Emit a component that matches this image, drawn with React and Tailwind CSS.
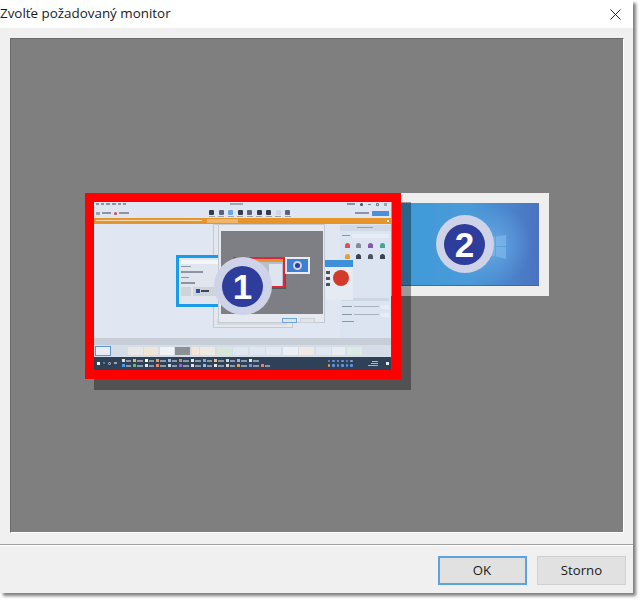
import React from "react";

const swatches = ["#d9dfe9","#e8b46a","#ffffff","#e0a060","#8fc0ee","#d98a5a","#e6e6e6","#7aa7e0","#f0c080","#cfd8e6","#90b8e8","#e8e8e8"];
const swatches2 = ["#4aa0e8","#60c070","#e8e8e8","#e88a70","#cfd8e6","#a060d8","#e8e8e8","#90c0f0","#e8e8e8","#d8d8d8","#e8a050","#7a8ae0","#e87a7a"];
const thumbs = [
  ["w-[15px]", "bg-[#e8e8e6]"],
  ["w-[14px]", "bg-[#efe6d8]"],
  ["w-[14px]", "bg-[#f1f3f6]"],
  ["w-[15px]", "bg-[#8c8f94]"],
  ["w-[7px]", "bg-[#f3e6d8]"],
  ["w-[15px]", "bg-[#efe9e2]"],
  ["w-[15px]", "bg-[#d6e8d8]"],
  ["w-[15px]", "bg-[#dfe7f3]"],
  ["w-[15px]", "bg-[#dfe7f3]"],
  ["w-[15px]", "bg-[#e3e9f3]"],
  ["w-[15px]", "bg-[#eceff4]"],
  ["w-[15px]", "bg-[#f0e8e4]"],
  ["w-[15px]", "bg-[#dfe7f3]"],
  ["w-[13px]", "bg-[#e8edf3]"],
  ["w-[15px]", "bg-[#d9ebe4]"],
];
const tools = ["#333c4c","#5a6478","#6ea4e6","#333c4c","#5a6478","#333c4c","#333c4c","#cfd6e2","#5a6478"];
const styleMarks = ["#d8505a","#7f8c9c","#8a55b0","#40a890","#e0a030","#3a4350","#4a5260","#3a4350"];

function Taskbar() {
  return (
    <div className="flex h-[13px] items-center gap-[3px] bg-[#2f4156] pl-[3px] pr-[2px]">
      <div className="flex w-[22px] items-center gap-[3px]">
        <span className="h-[3px] w-[3px] bg-white" />
        <span className="h-[2px] w-[2px] rounded-full bg-[#7f8b99]" />
        <span className="h-[3px] w-[3px] rounded-full border border-[#c5ccd6]" />
        <span className="h-[2px] w-[3px] bg-[#9aa5b2]" />
      </div>
      <div className="flex flex-1 flex-col gap-[2px]">
        <div className="flex gap-[2px]">
          {swatches.map((c, i) => (
            <div key={i} className="flex w-[9.6px] items-center gap-[1px]">
              <span className="h-[3px] w-[3px] shrink-0" style={{ background: c }} />
              <span className="h-[2px] flex-1 bg-[#8d99a8]" />
            </div>
          ))}
        </div>
        <div className="flex gap-[2px]">
          {swatches2.map((c, i) => (
            <div key={i} className="flex w-[9.6px] items-center gap-[1px]">
              <span className="h-[3px] w-[3px] shrink-0" style={{ background: c }} />
              <span className="h-[2px] flex-1 bg-[#8d99a8]" />
            </div>
          ))}
        </div>
      </div>
      <div className="flex w-[28px] flex-wrap gap-[2px]">
        {["#5a95e8","#5a95e8","#8aa0b8","#5a95e8","#5a95e8","#8aa0b8","#e89a50","#5a95e8","#7a8ae0","#5a95e8","#5a95e8","#5a95e8"].map((c, i) => (
          <span key={i} className="h-[2.5px] w-[2.5px] rounded-[1px]" style={{ background: c }} />
        ))}
      </div>
      <div className="flex w-[24px] flex-col items-end pr-[5px]">
        <span className="h-[1px] w-[6px] bg-[#aab4c0]" />
        <span className="mt-[1px] h-[1px] w-[7px] bg-[#aab4c0]" />
        <span className="mt-[1px] h-[1px] w-[10px] bg-[#aab4c0]" />
      </div>
      <span className="h-[3px] w-[3px] bg-[#e6e9ee]" />
    </div>
  );
}

function NumberBadge({ n, className }) {
  return (
    <div className={`absolute flex h-[58px] w-[58px] items-center justify-center rounded-full bg-[#cfd3e8] ${className}`}>
      <div className="flex h-[41px] w-[41px] items-center justify-center rounded-full bg-[#2e3d9c] text-[35px] leading-none font-bold text-white [font-family:'Liberation_Sans',sans-serif]">
        {n}
      </div>
    </div>
  );
}

function MiniDesktop() {
  return (
    <div className="relative flex h-[168px] w-[297px] flex-col overflow-hidden bg-[#e0e7f3] blur-[0.45px]">
      {/* title + toolbar */}
      <div className="flex h-[16px] flex-col bg-[#dfe6f1] px-[2px] pt-[1px]">
        <div className="flex items-center justify-between">
          <div className="flex gap-[2px]">
            {[3, 3, 4, 4, 3, 3].map((w, i) => (
              <span key={i} className="h-[1.5px] bg-[#8d95a3]" style={{ width: w }} />
            ))}
          </div>
          <span className="h-[1.5px] w-[13px] bg-[#a0a8b5]" />
          <div className="flex items-center gap-[5px] pr-[2px]">
            <span className="h-[1.5px] w-[8px] bg-[#8d95a3]" />
            <span className="h-[3px] w-[3px] rounded-full bg-[#47505f]" />
            <span className="h-[1px] w-[3px] bg-[#7b8494]" />
            <span className="h-[3px] w-[3px] border border-[#7b8494]" />
            <span className="h-[3px] w-[3px] bg-[#9aa3b1]" />
          </div>
        </div>
        <div className="mt-[4px] flex items-center">
          <span className="h-[3px] w-[4px] bg-[#9aa3b1]" />
          <span className="ml-[2px] h-[1.5px] w-[9px] bg-[#8d95a3]" />
          <span className="ml-[3px] h-[3px] w-[3px] rounded-full bg-[#d94b4b]" />
          <span className="ml-[2px] h-[1.5px] w-[10px] bg-[#8d95a3]" />
          <div className="ml-[80px] flex gap-[3.5px]">
            {tools.map((c, i) => (
              <div key={i} className="flex w-[6px] flex-col items-center gap-[1px]">
                <span className="h-[5px] w-[5px] rounded-[1px]" style={{ background: c }} />
                <span className="h-[1px] w-[6px] bg-[#9aa3b1]" />
              </div>
            ))}
          </div>
          <span className="ml-auto h-[1.5px] w-[14px] bg-[#8d95a3]" />
          <span className="ml-[3px] h-[5px] w-[17px] bg-[#4a8fd8]" />
        </div>
      </div>
      {/* banner */}
      <div className="flex h-[6px] items-center bg-[#e5952b] pl-[2px] pr-[2px]">
        <span className="h-[1.5px] w-[106px] bg-[#f6dcb4]" />
        <span className="ml-[5px] h-[4px] w-[31px] bg-[#efb568]" />
        <span className="ml-auto h-[2px] w-[2px] bg-white" />
      </div>
      {/* main area */}
      <div className="flex flex-1">
        <div className="flex-1" />
        <div className="w-[51px] bg-[#dbe4f0] pt-[1px]">
          <div className="flex h-[6px] items-center justify-center bg-[#d0d9e6]">
            <span className="h-[1.5px] w-[16px] bg-[#949daa]" />
          </div>
          <div className="mt-[3px] flex items-center gap-[2px] px-[2px]">
            <span className="h-[1.5px] w-[8px] bg-[#8d95a3]" />
            <span className="h-[4px] flex-1 bg-[#e8edf5]" />
          </div>
          <div className="mt-[5px] grid grid-cols-4 gap-x-[6px] gap-y-[6px] px-[5px]">
            {styleMarks.map((c, i) => (
              <span key={i} className="h-[5px] w-[5px] rounded-t-full" style={{ background: c }} />
            ))}
          </div>
          <div className="mt-[39px] flex flex-col gap-[4px] px-[2px]">
            <div className="h-[3px] bg-[#cdd6e3]" />
            <div className="flex items-center gap-[2px]">
              <span className="h-[1.5px] w-[10px] bg-[#8d95a3]" />
              <span className="h-[1px] flex-1 bg-[#a8b1be]" />
              <span className="h-[4px] w-[8px] bg-[#e8edf5]" />
            </div>
            <div className="flex items-center gap-[2px]">
              <span className="h-[1.5px] w-[10px] bg-[#8d95a3]" />
              <span className="h-[1px] flex-1 bg-[#a8b1be]" />
              <span className="h-[4px] w-[8px] bg-[#e8edf5]" />
            </div>
            <span className="h-[1.5px] w-[12px] bg-[#8d95a3]" />
          </div>
        </div>
      </div>
      <div className="h-[7px] bg-[#c8ced8]" />
      {/* filmstrip */}
      <div className="flex h-[12px] items-center bg-[#d5dde9] pl-[1px]">
        <div className="h-[10px] w-[16px] border border-[#5f97d8] bg-[#e8edf5]" />
        <div className="ml-[17px] flex gap-[1.5px]">
          {thumbs.map(([w, bg], i) => (
            <span key={i} className={`h-[8px] shrink-0 ${w} ${bg}`} />
          ))}
        </div>
      </div>
      <Taskbar />

      {/* floating windows inside the captured desktop */}
      <div className="absolute left-[119px] top-[22px] h-[104px] w-[80px] border border-[#c4c9d2] bg-[#e4e7ed]">
        <div className="absolute bottom-[2px] left-[3px] h-[6px] w-[70px] bg-[#d5d9e0]" />
      </div>
      <div className="absolute left-[82px] top-[53px] h-[52px] w-[60px] border-[3px] border-[#1a9bea] bg-[#e0e5ee] pl-[2px] pt-[2px]">
        <div className="h-[4px] bg-[#f3f5f9]" />
        <div className="mt-[2px] flex flex-col gap-[4px]">
          <span className="h-[1.5px] w-[10px] bg-[#8d95a3]" />
          <span className="h-[1.5px] w-[22px] bg-[#8d95a3]" />
          <span className="h-[1.5px] w-[8px] bg-[#8d95a3]" />
          <span className="h-[1.5px] w-[14px] bg-[#8d95a3]" />
        </div>
        <div className="mt-[3px] flex gap-[2px]">
          <span className="h-[9px] w-[10px] bg-[#cfd3da]" />
          <span className="flex h-[9px] flex-1 items-center gap-[1px] bg-[#cfd3da] pl-[3px]">
            <span className="h-[4px] w-[4px] bg-[#2e4a9c]" />
            <span className="h-[2px] w-[8px] bg-[#445]" />
          </span>
        </div>
      </div>
      <div className="absolute left-[231px] top-[58px] h-[40px] w-[28px] bg-[#e6ebf3]">
        <div className="h-[7px] bg-[#3d8fd8]" />
        <div className="absolute left-[8px] top-[10px] h-[16px] w-[16px] rounded-full bg-[#d23a2c]" />
        <div className="absolute left-[1px] top-[11px] h-[3px] w-[4px] bg-[#4a5260]" />
        <div className="absolute left-[1px] top-[17px] h-[3px] w-[4px] bg-[#4a5260]" />
        <div className="absolute left-[1px] top-[23px] h-[3px] w-[4px] bg-[#4a5260]" />
      </div>
      {/* nested dialog */}
      <div className="absolute left-[124px] top-[22px] h-[99px] w-[107px] border border-[#c4c9d2] bg-[#e6e9ef] px-[2px] pt-[6px]">
        <div className="relative h-[83px] w-[102px] bg-[#7d7f85]">
          <div className="absolute left-[13px] top-[27px] h-[31px] w-[52px] bg-[#55575c]" />
          <div className="absolute left-[64px] top-[26px] flex h-[17px] w-[25px] items-center justify-center border-[2px] border-[#e8ecf2] bg-[#3f7fd0]">
            <span className="h-[9px] w-[9px] rounded-full border-[2px] border-[#cfd3e8] bg-[#2e3d9c]" />
          </div>
          <div className="absolute left-[12px] top-[26px] h-[31px] w-[52px] border-[2px] border-[#d9283c] bg-[#b8bfcc]">
            <div className="h-[3px] bg-[#e5952b]" />
            <div className="ml-[34px] mt-[2px] h-[22px] w-[13px] bg-[#dfe5ef]" />
          </div>
        </div>
        <div className="mt-[4px] flex justify-end gap-[3px] pr-[7px]">
          <span className="h-[5px] w-[15px] border border-[#6da5dc] bg-[#e1e3e8]" />
          <span className="h-[5px] w-[15px] border border-[#cdd0d6] bg-[#e1e3e8]" />
        </div>
      </div>
    </div>
  );
}

export default function App() {
  return (
    <div className="h-[600px] w-[640px] overflow-hidden bg-white [font-family:'Open_Sans',sans-serif]">
      <div className="flex h-[593px] w-[633px] flex-col bg-[#f0f0f0] shadow-[3px_3px_3px_rgba(0,0,0,0.5)]">
        <header className="flex h-[28px] shrink-0 items-center justify-between bg-white pr-[12px]">
          <span className="text-[13.4px] leading-none text-[#1a1a1a]">Zvolťe požadovaný monitor</span>
          <svg width="11" height="11" viewBox="0 0 11 11" className="text-[#222]">
            <path d="M0.5 0.5 L10.5 10.5 M10.5 0.5 L0.5 10.5" stroke="currentColor" strokeWidth="1" fill="none" />
          </svg>
        </header>
        <div className="px-[9.5px] pt-[10px]">
          <div className="relative h-[495px] w-[614px] border border-t-[#6a6a6a] border-r-white border-b-white border-l-[#6a6a6a] bg-[#7f7f7f]">
            {/* second monitor, partly under the first */}
            <div className="absolute left-[380px] top-[153.5px] h-[103.5px] w-[158.5px] border-[10px] border-[#eeeeee]">
              <div className="relative h-full w-full overflow-hidden bg-gradient-to-r from-[#3f9ad8] via-[#4a9ad8] to-[#4a72c0]">
                <div className="absolute left-[52px] top-[2px] h-[80px] w-[80px] rounded-full bg-[radial-gradient(circle,rgba(120,190,245,0.55),rgba(120,190,245,0)_70%)]" />
                <svg className="absolute left-[83px] top-[29px]" width="24" height="30" viewBox="0 0 24 30">
                  <path d="M1 6 L11 4.5 V14 H1 Z M12 4.5 L22 3 V14 H12 Z M1 15 H11 V24.5 L1 23 Z M12 15 H22 V27 L12 24.5 Z" fill="#8ec2f0" opacity="0.5" />
                </svg>
                <div className="absolute bottom-0 h-[1.5px] w-full bg-[#3f6aa8]" />
              </div>
            </div>
            {/* shadow of first monitor */}
            <div className="absolute left-[83.5px] top-[163px] h-[188px] w-[317px] bg-black/35" />
            {/* first monitor */}
            <div className="absolute left-[74px] top-[153.5px] h-[186.5px] w-[316px] border-x-[9.5px] border-t-[9.5px] border-b-[9px] border-[#ff0000]">
              <MiniDesktop />
            </div>
            <NumberBadge n="1" className="left-[203px] top-[218px]" />
            <NumberBadge n="2" className="left-[425px] top-[176px]" />
          </div>
        </div>
        <footer className="mt-[11px] flex flex-1 items-start justify-end gap-[10.5px] border-t border-t-[#a0a0a0] pr-[7px] pt-[11px] shadow-[inset_0_1px_0_#ffffff]">
          <button className="h-[28.5px] w-[89px] border-2 border-[#5ba4e0] bg-[#e1e1e1] text-[13.2px] leading-none text-[#1a1a1a]">OK</button>
          <button className="h-[28.5px] w-[89px] border border-[#d0d0d0] bg-[#e1e1e1] text-[13.2px] leading-none text-[#1a1a1a]">Storno</button>
        </footer>
      </div>
    </div>
  );
}
